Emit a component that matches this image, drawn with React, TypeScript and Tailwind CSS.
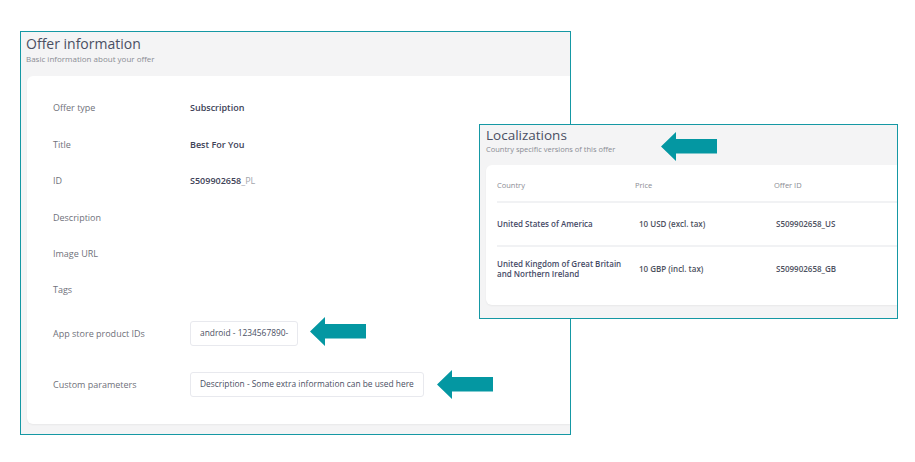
import React from 'react';

const font = { fontFamily: '"Open Sans", "Liberation Sans", sans-serif' };

const Arrow = ({ className }: { className: string }) => (
  <svg viewBox="0 0 56 29" className={`absolute w-[56px] h-[29px] ${className}`}>
    <polygon points="0,14.5 15,0 15,7 56,7 56,21.5 15,21.5 15,29" fill="#0497a2" />
  </svg>
);

const InfoRow = ({ label, children, h = 'h-[36.4px]' }: { label: string; children?: React.ReactNode; h?: string }) => (
  <div className={`flex items-center ${h}`}>
    <div className="w-[137px] shrink-0 text-[9px] text-[#6f717a]">{label}</div>
    <div className="text-[9px] font-semibold text-[#3d4257]">{children}</div>
  </div>
);

const locales = [
  { country: ['United States of America'], price: '10 USD (excl. tax)', id: 'S509902658_US' },
  { country: ['United Kingdom of Great Britain', 'and Northern Ireland'], price: '10 GBP (incl. tax)', id: 'S509902658_GB' },
];

export default function App() {
  return (
    <div className="relative w-[915px] h-[462px] bg-white overflow-hidden" style={font}>
      {/* Offer information panel */}
      <div className="absolute left-[20px] top-[31px] w-[551px] h-[404px] border border-[#1598a4] bg-[#f4f4f5] flex flex-col overflow-hidden">
        <div className="pl-[5px] pt-[3px] h-[44px]">
          <div className="text-[14px] leading-[18px] text-[#4a4f63]">Offer information</div>
          <div className="text-[8px] leading-[11px] text-[#8a8c94]">Basic information about your offer</div>
        </div>
        <div className="ml-[6px] mb-[10px] flex-1 bg-white rounded-l-md shadow-[0_1px_2px_rgba(0,0,0,0.05)] pl-[26px] pt-[14px]">
          <InfoRow label="Offer type">Subscription</InfoRow>
          <InfoRow label="Title">Best For You</InfoRow>
          <InfoRow label="ID">
            S509902658<span className="font-normal text-[#a3a5ad]">_PL</span>
          </InfoRow>
          <InfoRow label="Description" />
          <InfoRow label="Image URL" />
          <InfoRow label="Tags" />
          <div className="flex items-center h-[50px]">
            <div className="w-[137px] shrink-0 text-[9px] text-[#6f717a]">App store product IDs</div>
            <div className="h-[25px] px-[9px] flex items-center border border-[#e8e9ee] rounded-[3px] text-[8.4px] text-[#4a4f63]">
              android - 1234567890-
            </div>
          </div>
          <div className="flex items-center h-[52px]">
            <div className="w-[137px] shrink-0 text-[9px] text-[#6f717a]">Custom parameters</div>
            <div className="h-[25px] px-[9px] flex items-center border border-[#e8e9ee] rounded-[3px] text-[8.4px] text-[#4a4f63]">
              Description - Some extra information can be used here
            </div>
          </div>
        </div>
      </div>

      {/* Localizations panel */}
      <div className="absolute left-[479px] top-[124px] w-[419px] h-[195px] border border-[#1598a4] bg-[#f4f4f5] flex flex-col overflow-hidden">
        <div className="pl-[6px] pt-[2px] h-[40px]">
          <div className="text-[13.5px] leading-[17px] text-[#4a4f63]">Localizations</div>
          <div className="text-[7.5px] leading-[10px] text-[#8a8c94]">Country specific versions of this offer</div>
        </div>
        <div className="ml-[6px] mb-[13px] flex-1 bg-white rounded-l-md shadow-[0_1px_2px_rgba(0,0,0,0.05)] pl-[11px]">
          <div className="flex items-center h-[38px] pt-[5px] border-b-2 border-[#f1f2f4] text-[7.5px] text-[#8a8c94]">
            <div className="w-[138px]">Country</div>
            <div className="w-[139px]">Price</div>
            <div>Offer ID</div>
          </div>
          {locales.map((l, i) => (
            <div
              key={l.id}
              className={`flex items-center h-[44px] text-[8px] ${i === 0 ? 'border-b-2 border-[#f1f2f4]' : ''}`}
            >
              <div className="w-[142px] font-semibold text-[#454a66] leading-[10px]">
                {l.country.map(c => (
                  <div key={c}>{c}</div>
                ))}
              </div>
              <div className="w-[137px] font-semibold text-[#4d5160]">{l.price}</div>
              <div className="font-semibold text-[#4d5160]">{l.id}</div>
            </div>
          ))}
        </div>
      </div>

      <Arrow className="left-[310px] top-[317px]" />
      <Arrow className="left-[437px] top-[370px]" />
      <Arrow className="left-[661px] top-[132px]" />
    </div>
  );
}
